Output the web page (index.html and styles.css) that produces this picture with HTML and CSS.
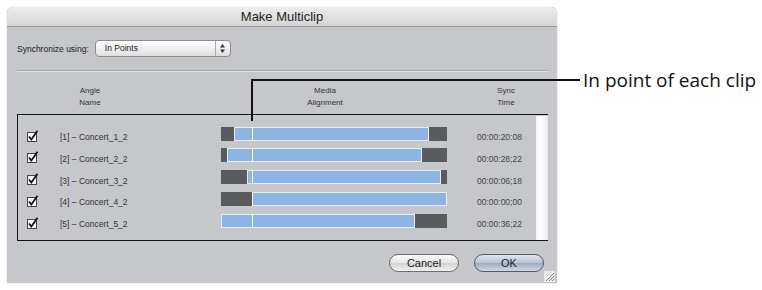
FILE: index.html
```html
<!DOCTYPE html>
<html>

<head>
  <meta charset="UTF-8">
  <title>Make Multiclip</title>
  <link rel="stylesheet" href="styles.css">
</head>

<body>
  <div class="stage">
    <div class="window">
      <div class="titlebar">Make Multiclip</div>

      <div class="sync-row">
        <span class="sync-label">Synchronize using:</span>
        <div class="popup">
          <span class="popup-text">In Points</span>
          <span class="popup-arrows">
            <svg width="7" height="11" viewBox="0 0 7 11">
              <path d="M3.5 1 L6 4.5 L1 4.5 Z" fill="#333"/>
              <path d="M3.5 10 L6 6.5 L1 6.5 Z" fill="#333"/>
            </svg>
          </span>
        </div>
      </div>

      <div class="separator"></div>

      <div class="table-head">
        <div class="head-cell">Angle<br>Name</div>
        <div class="head-cell">Media<br>Alignment</div>
        <div class="head-cell">Sync<br>Time</div>
      </div>

      <div class="table-box">
        <div class="rows">
          <div class="row">
            <span class="check"><svg width="12" height="13" viewBox="0 0 12 13"><rect x="0.5" y="2.5" width="9" height="9" fill="#fff" stroke="#444"/><path d="M2 6.5 L4.3 9.5 L10.5 0.8" fill="none" stroke="#111" stroke-width="1.8"/></svg></span>
            <span class="name">[1] – Concert_1_2</span>
            <div class="bar">
              <span class="seg seg-dark" style="width: 13px"></span>
              <span class="seg seg-clip" style="width: 195px"></span>
              <span class="seg seg-dark" style="width: 18px"></span>
              <span class="inpoint"></span>
            </div>
            <span class="time">00:00:20:08</span>
          </div>
          <div class="row">
            <span class="check"><svg width="12" height="13" viewBox="0 0 12 13"><rect x="0.5" y="2.5" width="9" height="9" fill="#fff" stroke="#444"/><path d="M2 6.5 L4.3 9.5 L10.5 0.8" fill="none" stroke="#111" stroke-width="1.8"/></svg></span>
            <span class="name">[2] – Concert_2_2</span>
            <div class="bar">
              <span class="seg seg-dark" style="width: 6px"></span>
              <span class="seg seg-clip" style="width: 195px"></span>
              <span class="seg seg-dark" style="width: 25px"></span>
              <span class="inpoint"></span>
            </div>
            <span class="time">00:00:28;22</span>
          </div>
          <div class="row">
            <span class="check"><svg width="12" height="13" viewBox="0 0 12 13"><rect x="0.5" y="2.5" width="9" height="9" fill="#fff" stroke="#444"/><path d="M2 6.5 L4.3 9.5 L10.5 0.8" fill="none" stroke="#111" stroke-width="1.8"/></svg></span>
            <span class="name">[3] – Concert_3_2</span>
            <div class="bar">
              <span class="seg seg-dark" style="width: 26px"></span>
              <span class="seg seg-clip" style="width: 194px"></span>
              <span class="seg seg-dark" style="width: 6px"></span>
              <span class="inpoint"></span>
            </div>
            <span class="time">00:00:06;18</span>
          </div>
          <div class="row">
            <span class="check"><svg width="12" height="13" viewBox="0 0 12 13"><rect x="0.5" y="2.5" width="9" height="9" fill="#fff" stroke="#444"/><path d="M2 6.5 L4.3 9.5 L10.5 0.8" fill="none" stroke="#111" stroke-width="1.8"/></svg></span>
            <span class="name">[4] – Concert_4_2</span>
            <div class="bar">
              <span class="seg seg-dark" style="width: 31px"></span>
              <span class="seg seg-clip" style="width: 195px"></span>
              <span class="inpoint"></span>
            </div>
            <span class="time">00:00:00;00</span>
          </div>
          <div class="row">
            <span class="check"><svg width="12" height="13" viewBox="0 0 12 13"><rect x="0.5" y="2.5" width="9" height="9" fill="#fff" stroke="#444"/><path d="M2 6.5 L4.3 9.5 L10.5 0.8" fill="none" stroke="#111" stroke-width="1.8"/></svg></span>
            <span class="name">[5] – Concert_5_2</span>
            <div class="bar">
              <span class="seg seg-clip" style="width: 194px"></span>
              <span class="seg seg-dark" style="width: 32px"></span>
              <span class="inpoint"></span>
            </div>
            <span class="time">00:00:36;22</span>
          </div>
        </div>
        <div class="scrollbar"></div>
      </div>

      <div class="buttons">
        <button class="btn" type="button">Cancel</button>
        <button class="btn btn-default" type="button">OK</button>
      </div>

      <div class="grip">
        <svg width="11" height="11" viewBox="0 0 11 11">
          <rect width="11" height="11" fill="#e9eaec"/>
          <path d="M10 2 L2 10 M10 5 L5 10 M10 8 L8 10" stroke="#8a8a8a" stroke-width="1"/>
        </svg>
      </div>
    </div>

    <!-- callout -->
    <div class="callout-line"></div>
    <div class="callout-drop"></div>
    <span class="callout-text">In point of each clip</span>
  </div>
</body>

</html>
```

FILE: styles.css
```css
body {
  margin: 0;
  background: #fff;
  font-family: "Liberation Sans", Arial, sans-serif;
}

.stage {
  position: relative;
  width: 762px;
  height: 290px;
  padding: 7px 0 0 7px;
  box-sizing: border-box;
}

.window {
  position: relative;
  display: flex;
  flex-direction: column;
  width: 550px;
  height: 276px;
  background: #c5c7ca;
  border-radius: 6px 6px 0 0;
  box-shadow: 0 0 1px #999;
  color: #222;
}

.titlebar {
  height: 19px;
  font-size: 13px;
  line-height: 19px;
  text-align: center;
  color: #222;
  background: linear-gradient(#ededed, #d4d4d4);
  border-bottom: 1px solid #9a9a9a;
  border-radius: 6px 6px 0 0;
}

.sync-row {
  display: flex;
  align-items: center;
  margin: 13px 0 0 10px;
  height: 17px;
}

.sync-label {
  font-size: 8.5px;
  margin-right: 6px;
}

.popup {
  display: flex;
  box-sizing: border-box;
  width: 136px;
  height: 17px;
  background: linear-gradient(#ffffff, #eeeeee 55%, #dedede);
  border: 1px solid #8d8d8d;
  border-radius: 4px;
}

.popup-text {
  flex: 1;
  padding-left: 9px;
  font-size: 8.5px;
  line-height: 15px;
}

.popup-arrows {
  display: flex;
  align-items: center;
  justify-content: center;
  width: 14px;
  border-left: 1px solid #aaa;
}

.separator {
  margin: 13px 9px 0 10px;
  height: 1px;
  background: #a6a8ab;
  border-bottom: 1px solid #dfe0e2;
}

.table-head {
  display: grid;
  grid-template-columns: 146px 324px 38px;
  margin: 13px 0 0 10px;
  font-size: 8px;
  line-height: 12px;
  color: #333;
}

.head-cell {
  text-align: center;
}

.table-box {
  display: flex;
  box-sizing: border-box;
  width: 531px;
  height: 127px;
  margin: 5px 0 0 10px;
  border: 1px solid #111;
  border-right: none;
}

.rows {
  flex: 1;
  padding-top: 11px;
}

.row {
  display: flex;
  align-items: center;
  height: 22px;
}

.row:nth-child(n+2) {
  margin-top: -0.25px;
}

.check {
  display: flex;
  width: 42px;
  padding-left: 9px;
  box-sizing: border-box;
  margin-top: -2px;
}

.name {
  width: 161px;
  font-size: 8.5px;
  color: #333;
}

.bar {
  position: relative;
  display: flex;
  width: 226px;
  height: 14px;
  margin-top: -7px;
  background: #b9babd;
  box-shadow: inset 0 1px 0 #8e8f92;
}

.seg {
  box-sizing: border-box;
  height: 14px;
}

.seg-dark {
  background: #5a5b5e;
}

.seg-clip {
  background: #8db4e2;
  border: 1px solid #e6edf7;
}

.inpoint {
  position: absolute;
  left: 31px;
  top: 0;
  width: 1px;
  height: 14px;
  background: #fff;
}

.time {
  padding-left: 30px;
  font-size: 8.5px;
  color: #444;
}

.scrollbar {
  width: 12px;
  margin-top: 1px;
  background: linear-gradient(90deg, #f4f4f4, #fff 40%, #e8e8e8);
}

.buttons {
  display: flex;
  justify-content: flex-end;
  gap: 15px;
  margin: 13px 13px 0 0;
}

.btn {
  width: 70px;
  height: 18px;
  padding: 0;
  font-family: "Liberation Sans", Arial, sans-serif;
  font-size: 11px;
  color: #222;
  background: linear-gradient(#fafafa, #e4e4e4 50%, #d2d2d2 51%, #f2f2f2);
  border: 1px solid #6d6d6d;
  border-radius: 9px;
}

.btn-default {
  background: linear-gradient(#dfe6ee, #b6c3d1 50%, #9eaec0 51%, #cdd8e3);
  border-color: #4f5a66;
}

.grip {
  position: absolute;
  right: 2px;
  bottom: 1px;
  line-height: 0;
}

.callout-line {
  position: absolute;
  left: 251px;
  top: 79px;
  width: 329px;
  height: 2px;
  background: #111;
}

.callout-drop {
  position: absolute;
  left: 251px;
  top: 79px;
  width: 2px;
  height: 42px;
  background: #111;
}

.callout-text {
  position: absolute;
  left: 583px;
  top: 68px;
  font-family: "Open Sans", sans-serif;
  font-size: 19px;
  line-height: 24px;
  color: #111;
}
```
